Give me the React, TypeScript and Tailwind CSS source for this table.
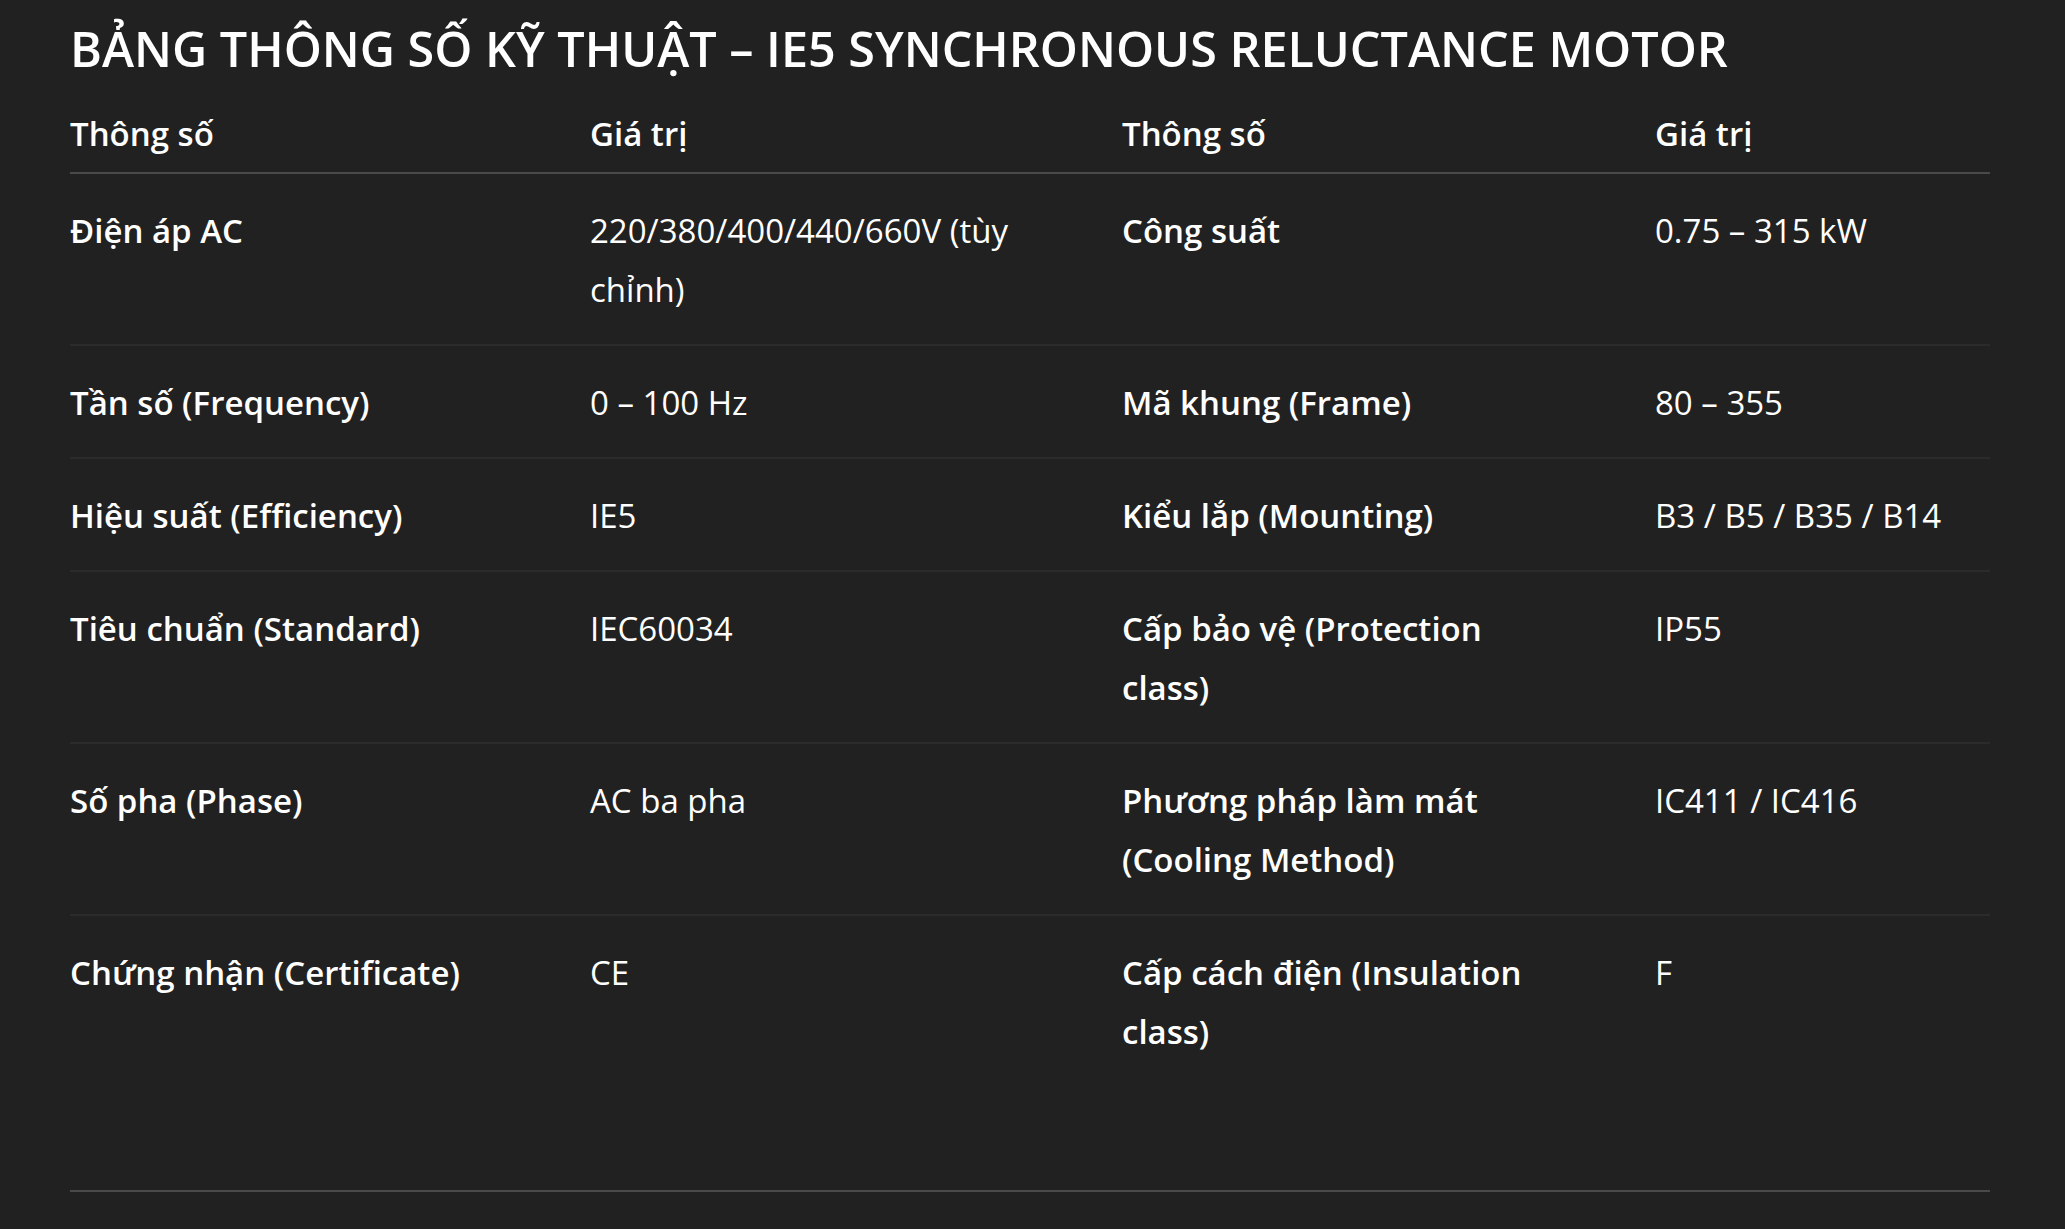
import React from "react";

// Spec rows: [label, value, label, value]
const rows: [string, string, string, string][] = [
  ["Điện áp AC", "220/380/400/440/660V (tùy\nchỉnh)", "Công suất", "0.75 – 315 kW"],
  ["Tần số (Frequency)", "0 – 100 Hz", "Mã khung (Frame)", "80 – 355"],
  ["Hiệu suất (Efficiency)", "IE5", "Kiểu lắp (Mounting)", "B3 / B5 / B35 / B14"],
  ["Tiêu chuẩn (Standard)", "IEC60034", "Cấp bảo vệ (Protection\nclass)", "IP55"],
  ["Số pha (Phase)", "AC ba pha", "Phương pháp làm mát\n(Cooling Method)", "IC411 / IC416"],
  ["Chứng nhận (Certificate)", "CE", "Cấp cách điện (Insulation\nclass)", "F"],
];

const grid = "grid grid-cols-[520px_532px_533px_335px]";

const App = () => {
  return (
    <div
      className="min-h-screen w-full bg-[#212121] text-white"
      style={{ fontFamily: '"Open Sans", "Noto Sans", sans-serif' }}
    >
      <div className="w-[1920px] ml-[70px]">
        {/* Title */}
        <h2 className="pt-[19px] text-[48.5px] leading-[1.2] font-semibold">
          BẢNG THÔNG SỐ KỸ THUẬT – IE5 SYNCHRONOUS RELUCTANCE MOTOR
        </h2>

        {/* Header */}
        <div className={`${grid} pt-[27px] pb-[9px] border-b-2 border-[#4a4a4a] text-[33px] leading-[59px] font-semibold`}>
          <div>Thông số</div>
          <div>Giá trị</div>
          <div>Thông số</div>
          <div>Giá trị</div>
        </div>

        {/* Body */}
        <div>
          {rows.map((r, i) => (
            <div
              key={i}
              className={`${grid} pt-[27px] pb-[25px] text-[33px] leading-[59px] ${
                i < rows.length - 1 ? "border-b-2 border-[#2b2b2b]" : ""
              }`}
            >
              <div className="font-semibold whitespace-pre-line">{r[0]}</div>
              <div className="whitespace-pre-line">{r[1]}</div>
              <div className="font-semibold whitespace-pre-line">{r[2]}</div>
              <div className="whitespace-pre-line">{r[3]}</div>
            </div>
          ))}
        </div>

        <div className="mt-[104px] border-t-2 border-[#4a4a4a]" />
      </div>
    </div>
  );
};

export default App;
